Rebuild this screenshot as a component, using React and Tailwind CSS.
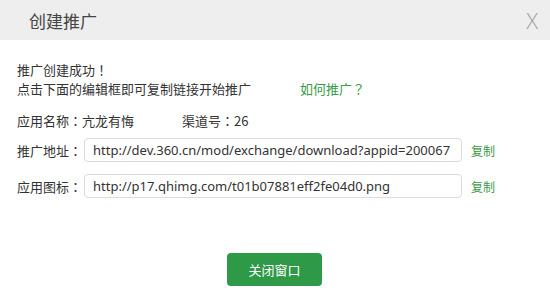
import React from "react";

const cjk = { fontFamily: '"Noto Sans CJK SC", "Noto Sans", sans-serif' };
const latin = { fontFamily: '"Noto Sans", "Noto Sans CJK SC", sans-serif' };
const P = ({ c }) => (
  <span style={{ fontFamily: '"Noto Sans CJK TC", "Noto Sans CJK SC", sans-serif' }}>{c}</span>
);

export default function App() {
  return (
    <div className="w-[550px] h-[304px] bg-white flex flex-col" style={cjk}>
      <div className="h-10 bg-[#eeeeee] flex items-center justify-between pl-[29px] pr-[12px]">
        <span className="text-[17px] text-[#444] leading-none">创建推广</span>
        <span className="text-[22px] text-[#a0a0a0] font-light leading-none" style={{ fontFamily: '"Open Sans", sans-serif' }}>X</span>
      </div>
      <div className="pl-[17px] pt-[20px] text-[13px] text-[#333] leading-[19px]">
        <div>推广创建成功<P c="！" /></div>
        <div className="flex">
          <span>点击下面的编辑框即可复制链接开始推广</span>
          <span className="ml-[49px] text-[#3a9b48]">如何推广<P c="？" /></span>
        </div>
        <div className="flex mt-[13px]">
          <span className="w-[165px]">应用名称<P c="：" />亢龙有悔</span>
          <span>渠道号<P c="：" />26</span>
        </div>
        <div className="flex items-center mt-[8px]">
          <span className="w-[67px]">推广地址<P c="：" /></span>
          <div className="w-[378px] h-[24px] border border-[#dcdcdc] rounded-[4px] pl-[8px] flex items-center overflow-hidden whitespace-nowrap text-[13px] text-[#333]" style={latin}>
            http://dev.360.cn/mod/exchange/download?appid=200067
          </div>
          <span className="ml-[9px] text-[#3a9b48] text-[12px]">复制</span>
        </div>
        <div className="flex items-center mt-[12px]">
          <span className="w-[67px]">应用图标<P c="：" /></span>
          <div className="w-[378px] h-[24px] border border-[#dcdcdc] rounded-[4px] pl-[8px] flex items-center overflow-hidden whitespace-nowrap text-[13px] text-[#333]" style={latin}>
            http://p17.qhimg.com/t01b07881eff2fe04d0.png
          </div>
          <span className="ml-[9px] text-[#3a9b48] text-[12px]">复制</span>
        </div>
      </div>
      <div className="flex justify-center mt-[55px]">
        <div className="w-[95px] h-[33px] bg-[#2e9946] rounded-[4px] text-white text-[13px] flex items-center justify-center ml-[-1px]">关闭窗口</div>
      </div>
    </div>
  );
}
